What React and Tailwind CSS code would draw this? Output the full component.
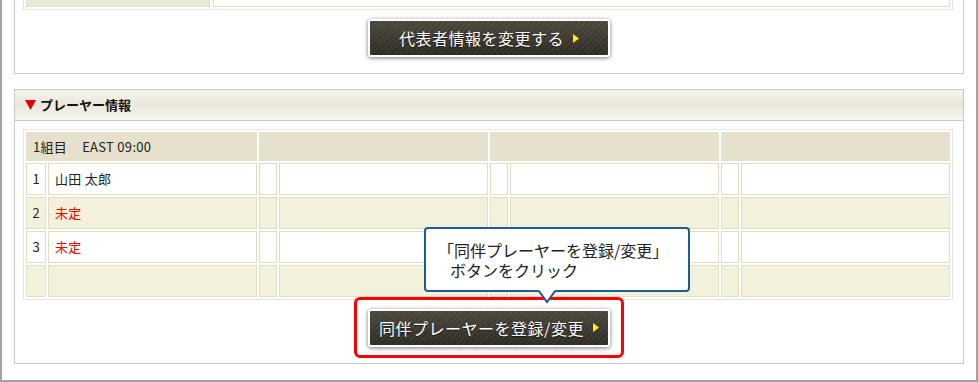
import React from 'react';

const FONT = "font-['Noto_Sans_CJK_JP','Noto_Sans',sans-serif]";

const ROWS = [
  { no: '1', name: '山田 太郎', pending: false },
  { no: '2', name: '未定', pending: true },
  { no: '3', name: '未定', pending: true },
  { no: '', name: '', pending: false },
];

// dark textured button used in both panels
function DarkButton({ label }) {
  return (
    <button
      type="button"
      className="flex h-[38px] w-[242px] items-center justify-center gap-[9px] rounded-[3px] border-2 border-white bg-[repeating-linear-gradient(135deg,rgba(255,255,255,0.045)_0px,rgba(255,255,255,0.045)_2px,transparent_2px,transparent_4px),linear-gradient(to_bottom,#4b463b,#2e2a23)] text-[16px] leading-none tracking-[0.5px] text-white shadow-[0_1px_4px_rgba(0,0,0,0.55)]"
    >
      <span className="[text-shadow:0_1px_1px_rgba(0,0,0,0.6)]">{label}</span>
      <svg width="6" height="9" viewBox="0 0 6 9">
        <polygon points="0,0 6,4.5 0,9" fill="#fff200" />
      </svg>
    </button>
  );
}

function Tooltip() {
  return (
    <div className="absolute left-[67px] top-[-73px] h-[65px] w-[266px] rounded-[4px] border-2 border-[#1d5d93] bg-white pt-[11px] text-[16px] leading-[20px] text-[#222]">
      <div className="pl-[12px]">「同伴プレーヤーを登録/変更」</div>
      <div className="pl-[24px]">ボタンをクリック</div>
      <svg className="absolute left-[112px] top-[61px]" width="18" height="14" viewBox="0 0 18 14">
        <polygon points="0,0 9,12 18,0" fill="#ffffff" />
        <polyline points="0.5,0.5 9,12 17.5,0.5" fill="none" stroke="#1d5d93" strokeWidth="2" strokeLinejoin="miter" />
      </svg>
    </div>
  );
}

function PlayerTable() {
  const cell = 'h-[32px] border border-[#e1dcc2]';
  return (
    <div className="ml-[8px] w-[930px] border border-[#e6e6e6] p-[2px]">
      <div className="grid grid-cols-[20px_209px_18px_209px_18px_209px_18px_209px] gap-[2px] text-[13px] text-[#222]">
        <div className="col-span-2 flex h-[29px] items-center bg-[#e6e1cc] pl-[7px] tracking-[0.3px]">
          1組目<span className="ml-[15px]">EAST 09:00</span>
        </div>
        <div className="col-span-2 h-[29px] bg-[#e6e1cc]" />
        <div className="col-span-2 h-[29px] bg-[#e6e1cc]" />
        <div className="col-span-2 h-[29px] bg-[#e6e1cc]" />
        {ROWS.map((r, i) => {
          const bg = i % 2 === 1 ? 'bg-[#f3f0dc]' : 'bg-white';
          return (
            <React.Fragment key={i}>
              <div className={`${cell} ${bg} flex items-center justify-center`}>{r.no}</div>
              <div className={`${cell} ${bg} flex items-center pl-[6px] tracking-[0.3px] ${r.pending ? 'text-[#ff0000]' : ''}`}>{r.name}</div>
              <div className={`${cell} ${bg}`} />
              <div className={`${cell} ${bg}`} />
              <div className={`${cell} ${bg}`} />
              <div className={`${cell} ${bg}`} />
              <div className={`${cell} ${bg}`} />
              <div className={`${cell} ${bg}`} />
            </React.Fragment>
          );
        })}
      </div>
    </div>
  );
}

export default function App() {
  return (
    <div className={`${FONT} h-[382px] w-[978px] overflow-hidden border-x-2 border-b-2 border-[#a3a3a3] bg-white px-[12px]`}>
      {/* representative panel (top cut off) */}
      <div className="flex h-[74px] w-[950px] flex-col items-center border-x border-b border-[#c8c8c8]">
        <div className="w-[930px] self-start ml-[8px] border-x border-b border-[#e6e6e6] px-[2px] pb-[2px]">
          <div className="flex h-[7px] gap-[3px]">
            <div className="w-[184px] border-x border-b border-[#e1dcc2] bg-[#ece7d6]" />
            <div className="flex-1 border-x border-b border-[#e1dcc2] bg-white" />
          </div>
        </div>
        <div className="mt-[9px]">
          <DarkButton label="代表者情報を変更する" />
        </div>
      </div>

      {/* player panel */}
      <div className="mt-[15px] flex h-[275px] w-[950px] flex-col border border-[#c8c8c8]">
        <div className="flex h-[31px] items-center gap-[4px] border-b border-[#c8c8c8] bg-[linear-gradient(to_bottom,#f4f2eb_0%,#ebe7d9_50%,#f5f5f2_100%)] pl-[10px] text-[13px] font-bold text-[#111]">
          <svg width="11" height="10" viewBox="0 0 11 10">
            <polygon points="0,0 11,0 5.5,10" fill="#e00000" />
          </svg>
          <span>プレーヤー情報</span>
        </div>
        <div className="pt-[8px]">
          <PlayerTable />
        </div>
        <div className="flex justify-center">
          <div className="relative -mt-[3px] flex h-[61px] w-[270px] items-center justify-center rounded-[6px] border-[3px] border-[#ff0000]">
            <DarkButton label="同伴プレーヤーを登録/変更" />
            <Tooltip />
          </div>
        </div>
      </div>
    </div>
  );
}
